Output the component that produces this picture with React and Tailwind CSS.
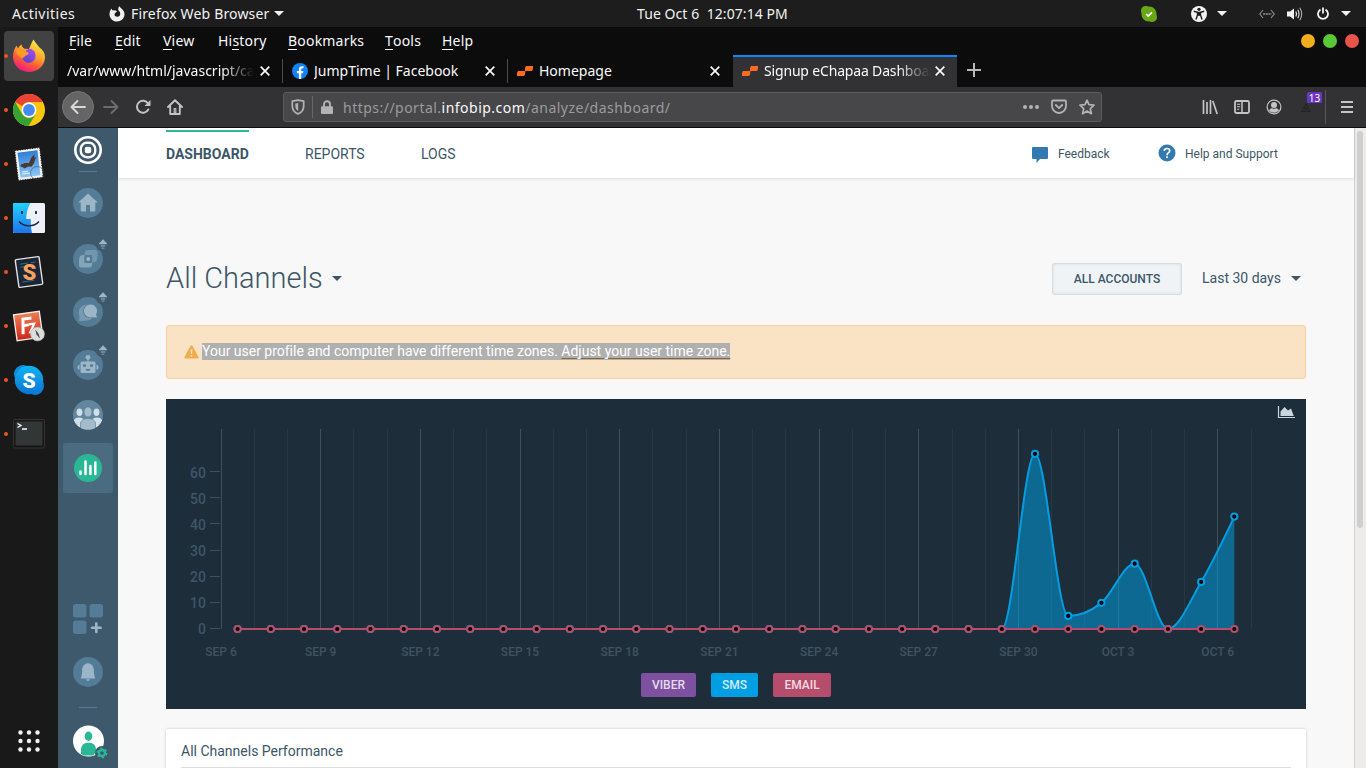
import React from "react";

const UI = "font-['Noto_Sans','Open_Sans',sans-serif]";

/* ---------- desktop top bar ---------- */

function CaretDown({ className = "", color = "#f2f2f2", w = 10, h = 5 }) {
  return (
    <svg width={w} height={h} viewBox="0 0 10 5" preserveAspectRatio="none" className={`block shrink-0 ${className}`}>
      <path d="M0 0H10L5 5Z" fill={color} />
    </svg>
  );
}

function TopBar() {
  return (
    <header className={`relative flex h-[27px] shrink-0 items-center bg-[#1d1d1d] text-[14px] text-[#f2f2f2] ${UI}`}>
      <span className="ml-3 w-[97px] whitespace-nowrap tracking-[0.5px]">Activities</span>
      <svg width="16" height="16" viewBox="0 0 16 16" className="block shrink-0">
        <path d="M8 15.6C3.7 15.6 .5 12.4 .5 8.3C.5 6 1.2 4 2.5 2.4C2.6 3.2 2.9 3.9 3.4 4.3L7 4.5L8 5.6L6.2 6.9C5.4 7.5 5.4 9 6.1 9.9C7 11 9.5 11.1 10.7 9.7C11.8 8.3 11.3 6.3 10 5.1C9 4.2 8.9 2 10.3 .3C11 1.6 12.2 2.1 13.2 3.2C14.8 4.8 15.6 6.4 15.5 8.6C15.3 12.6 12.1 15.6 8 15.6Z" fill="#f2f2f2" />
      </svg>
      <span className="ml-[6px] w-[138px] whitespace-nowrap tracking-[0.16px]">Firefox Web Browser</span>
      <CaretDown className="ml-[5px]" />
      <span className="ml-[353px] w-[151px] whitespace-pre tracking-[0.07px]">Tue Oct 6  12:07:14 PM</span>
      <svg width="16" height="16" viewBox="0 0 16 16" className="ml-[353px] block shrink-0">
        <path d="M4.500 0C6 0 7 .6 8 .6C12.500 .6 15.600 3.800 15.500 8C15.500 9 16 10 16 11.600C16 14 14 16 11.500 16C10 16 9 15.500 8 15.500C3.700 15.500 .5 12.300 .5 8C.5 7 0 6 0 4.500C0 2 2 0 4.500 0Z" fill="#68a818" />
        <path d="M5.200 8L7.200 10L11 6.400" fill="none" stroke="#fff" strokeWidth="1.700" />
      </svg>
      <svg width="16" height="16" viewBox="0 0 16 16" className="ml-[34px] block shrink-0">
        <circle cx="8" cy="8" r="8" fill="#f2f2f2" />
        <circle cx="8" cy="3.300" r="1.600" fill="#1d1d1d" />
        <path d="M2.800 5.300L6.500 6.200V9L5 13.500M13.200 5.300L9.500 6.200V9L11 13.500" fill="none" stroke="#1d1d1d" strokeWidth="1.400" />
        <path d="M6 5.800H10V9.800H6Z" fill="#1d1d1d" />
      </svg>
      <CaretDown className="ml-[10px]" />
      <svg width="16" height="10" viewBox="0 0 16 10" className="ml-[32px] block shrink-0" fill="none" stroke="#8a8a8a" strokeWidth="1.200">
        <path d="M4 1L.8 5L4 9M12 1L15.200 5L12 9" />
        <path d="M4 5H12.500" strokeWidth="1.500" strokeDasharray="2.200 .5" />
      </svg>
      <svg width="16" height="14" viewBox="0 0 16 14" className="ml-[12px] block shrink-0">
        <path d="M0 4.500H3L7 1.500V12.500L3 9.500H0Z" fill="#f2f2f2" />
        <path d="M8.800 4.500Q10.300 7 8.800 9.500" fill="none" stroke="#f2f2f2" strokeWidth="1.200" />
        <path d="M10.800 2.800Q13.200 7 10.800 11.200" fill="none" stroke="#d0d0d0" strokeWidth="1.200" />
        <path d="M12.800 .8Q16.600 7 12.800 13.200" fill="none" stroke="#a5a5a5" strokeWidth="1.200" />
      </svg>
      <svg width="12" height="13" viewBox="0 0 12 13" className="ml-[14px] block shrink-0" fill="none" stroke="#f2f2f2" strokeWidth="1.800">
        <path d="M3.500 2.600A5 5 0 1 0 8.500 2.600M6 .5V6.500" />
      </svg>
      <CaretDown className="ml-[12px]" />
    </header>
  );
}

/* ---------- dock ---------- */

function FirefoxLogo() {
  return (
    <svg width="34" height="34" viewBox="0 0 34 34">
      <defs>
        <linearGradient id="ffa" x1=".8" y1="0" x2=".3" y2="1">
          <stop offset="0" stopColor="#fff24a" />
          <stop offset=".4" stopColor="#ffb02e" />
          <stop offset=".7" stopColor="#ff5a36" />
          <stop offset="1" stopColor="#e6168a" />
        </linearGradient>
        <linearGradient id="ffb" x1=".8" y1="0" x2=".2" y2="1">
          <stop offset="0" stopColor="#a44cf0" />
          <stop offset="1" stopColor="#5a42c8" />
        </linearGradient>
      </defs>
      <path d="M17 33C8 33 1 26.500 1 17.500C1 12.500 3 9 4.500 6.500L6 9.500C7 7.500 8.500 6 9.500 5.500C9.800 7.500 11 9 12.500 9.800L17 10L20 3L21.500 .5C23 3.500 25.500 5.500 27.500 8.500C31 11 33 14 33 18C33 26.500 26 33 17 33Z" fill="url(#ffa)" />
      <path d="M10.500 16.500C12 12 15 9.800 18.500 10C22 10.500 24 14 23.500 17.500C23 22 19 24.500 15.500 23.800C12 23 10 20 10.500 16.500Z" fill="url(#ffb)" />
      <path d="M4 11C7 8.500 12 9.500 14 12.500L17 14C15.500 16.500 13.500 16 11.800 18.500C8 20 5 16 4 11Z" fill="#ff9a26" />
    </svg>
  );
}

function ChromeLogo() {
  return (
    <svg width="32" height="32" viewBox="0 0 32 32">
      <circle cx="16" cy="16" r="16" fill="#fbc610" />
      <path d="M2.140 8A16 16 0 0 1 29.860 8H16A8 8 0 0 0 9.070 12Z" fill="#ea4335" />
      <path d="M2.140 8A16 16 0 0 0 15.500 32L22.900 20A8 8 0 0 1 9.070 20Z" fill="#34a331" />
      <circle cx="16" cy="16" r="7.400" fill="#fff" />
      <circle cx="16" cy="16" r="5.900" fill="#448af2" />
    </svg>
  );
}

function StampLogo() {
  return (
    <svg width="34" height="34" viewBox="0 0 34 34">
      <defs>
        <linearGradient id="sky" x1="0" y1="0" x2="0" y2="1">
          <stop offset="0" stopColor="#2f7ed8" />
          <stop offset="1" stopColor="#8ec6f4" />
        </linearGradient>
      </defs>
      <g transform="rotate(-7 17 17)">
        <rect x="4.500" y="2" width="25" height="30" fill="#f3f3f0" />
        <rect x="4.500" y="2" width="25" height="30" fill="none" stroke="#191919" strokeWidth="1" strokeDasharray="1 1.500" />
        <rect x="7" y="4.500" width="20" height="25" fill="url(#sky)" />
        <path d="M8 18.500L9 16.500L13 15.500L17 16L20 11L23.500 8L23 11.500L25 10.500L22 17L19 20L16 19.500L12 21L10.500 19.500Z" fill="#4a3b34" />
        <path d="M9 24H15M9 26H17" stroke="#e9f4fd" strokeWidth="1" />
      </g>
      <circle cx="25" cy="26" r="6.500" fill="none" stroke="#3b4a5c" strokeOpacity=".5" />
    </svg>
  );
}

function FinderLogo() {
  return (
    <svg width="32" height="30" viewBox="0 0 32 30">
      <defs>
        <linearGradient id="fnd" x1="0" y1="0" x2="0" y2="1">
          <stop offset="0" stopColor="#1fd2ff" />
          <stop offset="1" stopColor="#1f74ee" />
        </linearGradient>
      </defs>
      <rect width="32" height="30" rx="1.500" fill="#eef2f8" />
      <path d="M1.500 0H17.500C14.500 5 13.300 10 13.300 16H17.800C17.700 21 18 26 19 30H1.500Q0 30 0 28.500V1.500Q0 0 1.500 0Z" fill="url(#fnd)" />
      <path d="M9 8V11M23 8V11" stroke="#1b2733" strokeWidth="1.800" />
      <path d="M6 18.500C11 24.300 21 24.300 26 18.500" fill="none" stroke="#1b2733" strokeWidth="1.400" />
    </svg>
  );
}

function SublimeLogo() {
  return (
    <svg width="32" height="34" viewBox="0 0 32 34">
      <g transform="rotate(-8 16 17)">
        <rect x="4" y="3" width="24" height="28" rx="1" fill="#1a2636" stroke="#e2e2e2" strokeWidth="1.400" />
        <path d="M8 8H16M8 11H13M19 8H24M8 26H20" stroke="#3f6b76" strokeWidth="1" />
      </g>
      <text x="16.300" y="25" textAnchor="middle" fontFamily="Roboto, sans-serif" fontSize="22" fontWeight="900" fill="#f9a15c">S</text>
    </svg>
  );
}

function FileZillaLogo() {
  return (
    <svg width="34" height="34" viewBox="0 0 34 34">
      <defs>
        <linearGradient id="fz" x1="0" y1="0" x2="0" y2="1">
          <stop offset="0" stopColor="#ee7f55" />
          <stop offset="1" stopColor="#cf241c" />
        </linearGradient>
      </defs>
      <g transform="rotate(-8 16 17)">
        <rect x="3.200" y="4" width="26" height="26" fill="url(#fz)" stroke="#f3efec" strokeWidth="1.300" />
        <path d="M10 24.500L12 9.500H20.500M10.500 16H17" fill="none" stroke="#fff" strokeWidth="3" />
        <path d="M17 15.500H22.500L17.500 23.500H22" fill="none" stroke="#fff" strokeWidth="2.200" />
      </g>
      <circle cx="25.500" cy="25" r="7" fill="#dcdddd" stroke="#a5a5a5" strokeWidth=".6" />
      <path d="M23.200 20.500L26.500 24.400L28 29.500L24.600 25.800Z" fill="#4a4a4a" />
    </svg>
  );
}

function SkypeLogo() {
  return (
    <svg width="32" height="32" viewBox="0 0 32 32">
      <defs>
        <linearGradient id="sk" x1="0" y1="0" x2="0" y2="1">
          <stop offset="0" stopColor="#10b4f2" />
          <stop offset="1" stopColor="#0b74d4" />
        </linearGradient>
      </defs>
      <circle cx="10" cy="10" r="9" fill="#0c8fdb" />
      <circle cx="22" cy="22" r="9" fill="#0b80dc" />
      <circle cx="16" cy="16" r="14.200" fill="url(#sk)" />
      <text x="16" y="23.500" textAnchor="middle" fontFamily="Roboto, sans-serif" fontSize="21" fontWeight="900" fill="#fff">S</text>
    </svg>
  );
}

function TerminalLogo() {
  return (
    <svg width="32" height="30" viewBox="0 0 32 30">
      <rect x=".5" y=".5" width="31" height="28.500" rx="1.500" fill="#161616" stroke="#343434" />
      <rect x="2.500" y="2.500" width="27" height="24" fill="#333636" />
      <path d="M4.500 4.500L8 6.500L4.500 8.500M9 10H14" fill="none" stroke="#fff" strokeWidth="1.300" />
    </svg>
  );
}

const DOCK = [FirefoxLogo, ChromeLogo, StampLogo, FinderLogo, SublimeLogo, FileZillaLogo, SkypeLogo, TerminalLogo];

function Dock() {
  return (
    <aside className="flex w-[58px] shrink-0 flex-col justify-between bg-[#191919] pt-[4px] pb-[16px]">
      <div className="flex flex-col gap-1">
        {DOCK.map((Logo, i) => (
          <div key={i} className="flex h-[50px] items-center">
            <i className="z-10 ml-[4px] block h-1 w-1 shrink-0 rounded-full bg-[#e9541f]" />
            <div className={i === 0 ? "-ml-1 flex h-[50px] w-[50px] items-center justify-center rounded-[4px] bg-[#424242]" : "-ml-1 flex h-[50px] w-[50px] items-center justify-center"}>
              <Logo />
            </div>
          </div>
        ))}
      </div>
      <svg width="22" height="22" viewBox="0 0 22 22" className="ml-[18px] block" fill="#f2f2f2">
        {[2.5, 11, 19.5].map((y) => [2.5, 11, 19.5].map((x) => <circle key={`${x}-${y}`} cx={x} cy={y} r="2.200" />))}
      </svg>
    </aside>
  );
}

/* ---------- browser chrome ---------- */

function MenuItem({ label, at = 0, className }) {
  return (
    <span className={`shrink-0 whitespace-nowrap ${className}`}>
      {label.slice(0, at)}
      <span className="inline-block border-b border-[#f9f9fa] leading-[16px]">{label[at]}</span>
      {label.slice(at + 1)}
    </span>
  );
}

function MenuBar() {
  return (
    <div className="flex h-[28px] shrink-0 items-center bg-[#0c0c0d] pl-[11px] text-[14px] tracking-[0.2px] text-[#f9f9fa]">
      <div className="flex pb-[2px]">
        <MenuItem label="File" className="w-[46px]" />
        <MenuItem label="Edit" className="w-[48px]" />
        <MenuItem label="View" className="w-[55px]" />
        <MenuItem label="History" at={2} className="w-[70px]" />
        <MenuItem label="Bookmarks" className="w-[97px]" />
        <MenuItem label="Tools" className="w-[57px]" />
        <MenuItem label="Help" className="w-[40px]" />
      </div>
      <div className="ml-auto flex gap-2 pr-[7px]">
        <i className="h-[14px] w-[14px] rounded-full bg-[#f0ad1e]" />
        <i className="h-[14px] w-[14px] rounded-full bg-[#5ac837]" />
        <i className="h-[14px] w-[14px] rounded-full bg-[#ea5349]" />
      </div>
    </div>
  );
}

function Close() {
  return (
    <svg width="10" height="10" viewBox="0 0 10 10" className="block shrink-0">
      <path d="M.7 .7L9.300 9.300M9.300 .7L.7 9.300" stroke="#f9f9fa" strokeWidth="1.700" />
    </svg>
  );
}

function InfobipIcon() {
  return (
    <svg width="16" height="16" viewBox="0 0 16 16" className="block shrink-0" fill="#ff6a22">
      <path d="M9 3H16V6L15 8H8V5Z" />
      <path d="M1 8H8.500L8 11.500L7 13H0V10Z" />
    </svg>
  );
}

function FacebookIcon() {
  return (
    <svg width="16" height="16" viewBox="0 0 16 16" className="block shrink-0">
      <circle cx="8" cy="8" r="8" fill="#1183f5" />
      <path d="M6.900 16V10.300H4.900V8H6.900V6.400C6.900 4.300 8.100 3.200 9.900 3.200L11.500 3.300V5.300H10.400C9.500 5.300 9.200 5.800 9.200 6.500V8H11.400L11 10.300H9.200V16Z" fill="#fff" />
    </svg>
  );
}

function Tab({ icon, title, active, sep, fade }) {
  return (
    <div className={`flex h-[32px] shrink-0 items-center border-t-2 pb-[2px] pl-[9px] ${active ? "w-[224px] border-[#0a84ff] bg-[#323234]" : "w-[225px] border-transparent"}`}>
      {icon && <span className="mr-[6px]">{icon}</span>}
      <span className={`mb-[2px] block min-w-0 flex-1 overflow-hidden whitespace-nowrap ${active ? "tracking-[-0.17px]" : ""} ${fade ? "[mask-image:linear-gradient(to_right,black_calc(100%-32px),transparent)]" : ""}`}>{title}</span>
      <span className={active ? "mr-[12px] ml-[5px]" : "mr-[12px] ml-[6px]"}><Close /></span>
      {sep ? <i className="block h-[24px] w-px bg-[#4c4c4e]" /> : <i className={active ? "w-0" : "w-px"} />}
    </div>
  );
}

function TabStrip() {
  return (
    <div className="flex h-[32px] shrink-0 items-center bg-[#0c0c0d] text-[14px] text-[#f9f9fa]">
      <Tab title="/var/www/html/javascript/ca" sep fade />
      <Tab icon={<FacebookIcon />} title="JumpTime | Facebook" sep />
      <Tab icon={<InfobipIcon />} title="Homepage" />
      <Tab icon={<InfobipIcon />} title="Signup eChapaa Dashboa" active fade />
      <svg width="14" height="14" viewBox="0 0 14 14" className="mb-[2px] ml-[10px] block">
        <path d="M0 7H14M7 0V14" stroke="#b8b8b9" strokeWidth="2" />
      </svg>
    </div>
  );
}

function NavBar() {
  return (
    <div className="flex h-[41px] shrink-0 items-center border-b border-[#0c0c0d] bg-[#323234]">
      <div className="ml-[4px] flex h-[32px] w-[32px] items-center justify-center rounded-full border border-[#777779] bg-[#656566]">
        <svg width="16" height="16" viewBox="0 0 16 16" fill="none" stroke="#d8d8d9" strokeWidth="1.900" strokeLinecap="round" strokeLinejoin="round">
          <path d="M15 8H1.500M7.500 2L1.500 8L7.500 14" />
        </svg>
      </div>
      <svg width="16" height="16" viewBox="0 0 16 16" className="ml-[9px] block" fill="none" stroke="#6c6c6e" strokeWidth="1.900" strokeLinecap="round" strokeLinejoin="round">
        <path d="M1 8H14.500M8.500 2L14.500 8L8.500 14" />
      </svg>
      <svg width="16" height="16" viewBox="0 0 16 16" className="ml-[16px] block" fill="none" stroke="#c4c4c5" strokeWidth="2">
        <path d="M13.300 10.500A6 6 0 1 1 13 4.500" strokeLinecap="round" />
        <path d="M15.500 1V7H9.500Z" fill="#c4c4c5" stroke="none" />
      </svg>
      <svg width="16" height="16" viewBox="0 0 16 16" className="ml-[16px] block" fill="none" stroke="#c4c4c5" strokeWidth="1.900" strokeLinejoin="round" strokeLinecap="round">
        <path d="M1 8L8 1.200L15 8M3.200 7.500V15H12.800V7.500" />
        <path d="M7.200 9.500H8.800V14H7.200Z" strokeWidth="1.200" />
      </svg>
      <div className="ml-[100px] flex h-[30px] w-[819px] items-center rounded-[3px] border border-[#5c5c5f] bg-[#474749]">
        <svg width="14" height="16" viewBox="0 0 14 16" className="ml-[7px] block" fill="none" stroke="#b3b3b4" strokeWidth="1.700">
          <path d="M7 1.200L12.700 2.200V7C12.700 11 10.500 13.500 7 14.900C3.500 13.500 1.300 11 1.300 7V2.200Z" strokeLinejoin="round" />
          <path d="M7.200 4V12C5 10.800 4.300 9 4.300 7V4.500Z" fill="#b3b3b4" stroke="none" />
        </svg>
        <i className="ml-[7px] block h-[22px] w-px bg-[#67676a]" />
        <svg width="12" height="14" viewBox="0 0 12 14" className="ml-[8px] block">
          <path d="M3 7V4.300A3 3 0 0 1 9 4.300V7" fill="none" stroke="#b3b3b4" strokeWidth="1.900" />
          <rect x="0" y="6.300" width="12" height="7.700" rx="1" fill="#b3b3b4" />
        </svg>
        <span className="ml-[10px] w-[360px] text-[14px] tracking-[0.48px] whitespace-nowrap text-[#9b9b9d]">
          https://portal.<span className="text-[#f9f9fa]">infobip.com</span>/analyze/dashboard/
        </span>
        <svg width="16" height="4" viewBox="0 0 16 4" className="ml-auto block" fill="#b3b3b4">
          <circle cx="2" cy="2" r="2" /><circle cx="8" cy="2" r="2" /><circle cx="14" cy="2" r="2" />
        </svg>
        <svg width="16" height="16" viewBox="0 0 16 16" className="ml-[12px] block" fill="none" stroke="#b3b3b4" strokeWidth="1.800" strokeLinecap="round" strokeLinejoin="round">
          <path d="M2 1.500H14Q15 1.500 15 2.500V7A7 7 0 0 1 1 7V2.500Q1 1.500 2 1.500Z" />
          <path d="M4.800 6L8 9.200L11.200 6" />
        </svg>
        <svg width="16" height="16" viewBox="0 0 16 16" className="mr-[6px] ml-[12px] block" fill="none" stroke="#b3b3b4" strokeWidth="1.700" strokeLinejoin="round">
          <path d="M8 1.200L10 5.700L15 6.200L11.300 9.600L12.400 14.700L8 12.100L3.600 14.700L4.700 9.600L1 6.200L6 5.700Z" />
        </svg>
      </div>
      <svg width="16" height="16" viewBox="0 0 16 16" className="ml-[100px] block" stroke="#c4c4c5" strokeWidth="1.700">
        <path d="M1.500 1V15M5 3V15M8.500 1V15M10.800 2L15.200 15" />
      </svg>
      <svg width="16" height="14" viewBox="0 0 16 14" className="ml-[16px] block" fill="none" stroke="#c4c4c5" strokeWidth="1.800">
        <rect x="1" y="1" width="14" height="12" rx="1.500" />
        <path d="M8 1V13" strokeWidth="1.500" />
        <path d="M3 4.200H6.200M3 6.700H6.200M3 9.200H5.200" strokeWidth="1.100" />
      </svg>
      <svg width="16" height="16" viewBox="0 0 16 16" className="ml-[16px] block" fill="#c4c4c5">
        <circle cx="8" cy="8" r="6.900" fill="none" stroke="#c4c4c5" strokeWidth="1.200" />
        <circle cx="8" cy="6" r="3" />
        <path d="M3 11.200C4.500 9.300 5.500 9.300 6.300 9.300Q8 10.300 9.700 9.300C10.500 9.300 11.500 9.300 13 11.200Q11.200 13.700 8 13.700Q4.800 13.700 3 11.200Z" />
      </svg>
      <div className="relative ml-[19px] h-[30px] w-[21px]">
        <svg width="10" height="9" viewBox="0 0 10 9" className="absolute top-[11px] left-0 block" fill="none" stroke="#232325" strokeWidth=".9">
          <path d="M.5 8.500L5 .8L9.500 8.500ZM3 8.500L5 4.800L7 8.500M3 5H7" />
        </svg>
        <span className="absolute top-0 left-[6px] flex h-[11px] w-[15px] items-center justify-center rounded-[1.500px] bg-[#6a35c2] text-[10px] leading-none text-white">13</span>
      </div>
      <i className="ml-[3px] block h-[34px] w-px bg-[#58585b]" />
      <svg width="12" height="12" viewBox="0 0 12 12" className="ml-[15px] block">
        <path d="M0 1H12M0 6H12M0 11H12" stroke="#c4c4c5" strokeWidth="2" />
      </svg>
    </div>
  );
}

/* ---------- portal side navigation ---------- */

const DISC = "#547c97";
const PALE = "#9bb6c7";

function UpBadge() {
  return (
    <g transform="translate(-1 0)">
      <circle cx="31" cy="6" r="7.500" fill="#3d596b" />
      <path d="M31 1.200L35 5.400V6.200H27V5.400ZM28.800 7.500H33.200V8.500H28.800ZM29.600 9.700H32.400V10.500H29.600Z" fill={PALE} />
    </g>
  );
}

function SideNav() {
  return (
    <nav className="flex w-[60px] shrink-0 flex-col items-center bg-[#3d596b]">
      <svg width="28" height="28" viewBox="0 0 28 28" className="mt-[8px] block">
        <circle cx="14" cy="14" r="12.700" fill="none" stroke="#fff" strokeWidth="2.600" />
        <rect x="6.800" y="6.800" width="14.400" height="14.400" rx="6" fill="none" stroke="#fff" strokeWidth="2.400" />
        <rect x="10.800" y="10.800" width="6.400" height="6.400" rx="2" fill="#fff" />
      </svg>
      <i className="mt-[7px] block h-px w-[18px] bg-[#547c97]" />
      <svg width="30" height="30" viewBox="0 0 30 30" className="mt-[16px] block">
        <circle cx="15" cy="15" r="15" fill={DISC} />
        <path d="M15 5.500L24.800 14.500H22.300V22.500Q22.300 23.500 21.300 23.500H17V17H13V23.500H8.700Q7.700 23.500 7.700 22.500V14.500H5.200Z" fill={PALE} />
      </svg>
      <svg width="38" height="38" viewBox="0 0 38 38" className="mt-[20px] ml-[8px] block">
        <circle cx="15" cy="21" r="15" fill={DISC} />
        <path d="M15 12H22Q24.500 12 24.500 14.500V19Q24.500 24 20 24.500H11.500V16Q11.500 12 15 12Z" fill="#7397ad" />
        <path d="M10 17H19.200V26Q19.200 29.500 16 29.500H8.500Q6 29.500 6 27V22Q6 17 10 17Z" fill="#84a4b8" />
        <rect x="11.300" y="17" width="8" height="8" rx="1" fill={DISC} />
        <circle cx="15.200" cy="21" r="1.900" fill={PALE} />
        <UpBadge />
      </svg>
      <svg width="38" height="38" viewBox="0 0 38 38" className="mt-[15px] ml-[8px] block">
        <circle cx="15" cy="21" r="15" fill={DISC} />
        <path d="M6 30L6.500 25A8 8 0 1 1 14 29.500L9 30Z" fill={PALE} fillOpacity=".5" />
        <circle cx="17.500" cy="20" r="7.300" fill={DISC} />
        <path d="M17.500 13.500A6.500 6.500 0 1 0 19 26.300L24 26.500L23 23.500A6.500 6.500 0 0 0 17.500 13.500Z" fill={PALE} />
        <UpBadge />
      </svg>
      <svg width="38" height="38" viewBox="0 0 38 38" className="mt-[15px] ml-[8px] block">
        <circle cx="15" cy="21" r="15" fill={DISC} />
        <path d="M14.400 14H15.600V18H14.400Z" fill={PALE} />
        <circle cx="15" cy="13.300" r="2.400" fill={PALE} />
        <rect x="7.500" y="17.500" width="15" height="11.500" rx="1.500" fill={PALE} />
        <path d="M6.500 20.500V26Q4.500 25.500 4.500 23.200Q4.500 21 6.500 20.500ZM23.500 20.500V26Q25.500 25.500 25.500 23.200Q25.500 21 23.500 20.500Z" fill={PALE} />
        <circle cx="11.500" cy="21.500" r="1.600" fill={DISC} />
        <circle cx="18.500" cy="21.500" r="1.600" fill={DISC} />
        <path d="M12.500 25H17.500Q17 27 15 27Q13 27 12.500 25Z" fill={DISC} />
        <UpBadge />
      </svg>
      <svg width="30" height="30" viewBox="0 0 30 30" className="mt-[18px] block">
        <defs><clipPath id="ppl"><circle cx="15" cy="15" r="15" /></clipPath></defs>
        <circle cx="15" cy="15" r="15" fill="#62869f" />
        <g clipPath="url(#ppl)">
          <g fill="#d3dfe6">
            <ellipse cx="6.500" cy="12.300" rx="2.900" ry="3.800" /><ellipse cx="23.500" cy="12.300" rx="2.900" ry="3.800" />
            <path d="M1 27V20Q2 17.500 6 17.500Q10 17.500 11 20V27ZM29 27V20Q28 17.500 24 17.500Q20 17.500 19 20V27Z" />
          </g>
          <g fill="#a3bccb" stroke="#62869f" strokeWidth=".7">
            <ellipse cx="15" cy="12" rx="4" ry="5" />
            <path d="M7.500 30V23Q8.500 18.500 15 18.500Q21.500 18.500 22.500 23V30Z" />
          </g>
        </g>
      </svg>
      <div className="mt-[13px] flex h-[50px] w-[50px] shrink-0 items-center justify-center rounded-[3px] bg-[#4a6b80]">
        <svg width="28" height="28" viewBox="0 0 28 28" className="block">
          <circle cx="14" cy="14" r="14" fill="#2ab795" />
          <path d="M6.500 17.500V20M11.500 7.500V20M16.400 12V20M21.300 8.500V20" stroke="#fff" strokeWidth="2.500" strokeLinecap="round" />
        </svg>
      </div>
      <svg width="30" height="30" viewBox="0 0 30 30" className="mt-[111px] block">
        <g fill={DISC}>
          <rect width="13.500" height="13.500" rx="2.500" /><rect x="16.500" width="13.500" height="13.500" rx="2.500" /><rect y="16.500" width="13.500" height="13.500" rx="2.500" />
        </g>
        <path d="M23.300 19.500V28M19 23.700H27.600" stroke={PALE} strokeWidth="2.600" strokeLinecap="round" />
      </svg>
      <svg width="30" height="30" viewBox="0 0 30 30" className="mt-[23px] block">
        <circle cx="15" cy="15" r="15" fill={DISC} />
        <path d="M15 6.300C19 6.800 20.700 9.500 20.800 13C20.900 17 21.300 19 22.300 21.500H7.700C8.700 19 9.100 17 9.200 13C9.300 9.500 11 6.800 15 6.300ZM13 22.200H17Q16.500 24 15 24Q13.500 24 13 22.200Z" fill={PALE} />
      </svg>
      <i className="mt-[20px] block h-px w-[18px] shrink-0 bg-[#547c97]" />
      <svg width="36" height="34" viewBox="0 0 36 34" className="mt-[17px] ml-[6px] block shrink-0">
        <circle cx="15.500" cy="16" r="15.500" fill="#fff" />
        <ellipse cx="15.500" cy="11.300" rx="3.800" ry="4.700" fill="#2ab795" />
        <path d="M8 29V23.500Q9 17.800 15.500 17.800Q22 17.800 23 23.500V27L20 30.500H10.500Z" fill="#2ab795" />
        <circle cx="29" cy="28" r="7" fill="#3d596b" />
        <circle cx="29" cy="28" r="3" fill="none" stroke="#2ab795" strokeWidth="2.300" />
        <circle cx="29" cy="28" r="4.600" fill="none" stroke="#2ab795" strokeWidth="1.700" strokeDasharray="2.400 2.417" />
      </svg>
    </nav>
  );
}

/* ---------- dashboard ---------- */

function PageHeader() {
  return (
    <div className="relative z-10 flex h-[50px] shrink-0 items-start bg-white pt-[2px] pl-[48px] text-[14px] text-[#3c5668] shadow-[0_1px_3px_rgba(0,0,0,0.12)]">
      <span className="flex h-[48px] w-[83px] items-center border-t-2 border-[#2ab795] pb-[2px] font-bold whitespace-nowrap">DASHBOARD</span>
      <span className="ml-[56px] flex h-[48px] w-[60px] items-center">REPORTS</span>
      <span className="ml-[56px] flex h-[48px] w-[40px] items-center">LOGS</span>
      <div className="ml-auto flex h-[48px] items-center pr-[76px] text-[12px]">
        <svg width="16" height="16" viewBox="0 0 16 16" className="mt-[2px] block">
          <path d="M1 0H15Q16 0 16 1V11Q16 12 15 12H8L4.500 16V12H1Q0 12 0 11V1Q0 0 1 0Z" fill="#337ab0" />
        </svg>
        <span className="ml-[10px] w-[52px] whitespace-nowrap">Feedback</span>
        <svg width="18" height="18" viewBox="0 0 18 18" className="-mt-[2px] ml-[48px] block">
          <circle cx="9" cy="9" r="8.500" fill="#337ab0" />
          <path d="M6.300 7Q6.300 4.500 9 4.500Q11.700 4.500 11.700 6.800Q11.700 8 10.300 8.900Q9 9.700 9 11.200" fill="none" stroke="#fff" strokeWidth="1.700" />
          <rect x="8.100" y="12.300" width="1.800" height="1.800" fill="#fff" />
        </svg>
        <span className="ml-[9px] w-[93px] whitespace-nowrap">Help and Support</span>
      </div>
    </div>
  );
}

const SMS = [...Array(24).fill(0), 67, 5, 10, 25, 0, 18, 43];
const LABELS = ["SEP 6", "SEP 9", "SEP 12", "SEP 15", "SEP 18", "SEP 21", "SEP 24", "SEP 27", "SEP 30", "OCT 3", "OCT 6"];
const STEP = 33.225;
const BASE = 230;
const px = (i) => 71.6 + i * STEP;
const py = (v) => BASE - v * 2.615;

/* Monotone cubic interpolation, so the curve never overshoots its points. */
function curve(values) {
  const s = values.slice(1).map((v, i) => py(v) - py(values[i]));
  const t = values.map((_, i) => {
    if (i === 0 || i === values.length - 1) return 0;
    const a = s[i - 1];
    const b = s[i];
    if (a * b <= 0) return 0;
    return Math.sign(a) * Math.min(2 * Math.abs(a), 2 * Math.abs(b), Math.abs(a + b) / 2);
  });
  const n = values.length - 1;
  t[n] = (3 * s[n - 1] - t[n - 1]) / 2;
  return values.slice(1).reduce((d, v, k) => {
    const i = k + 1;
    return `${d}C${px(k) + STEP / 3} ${py(values[k]) + t[k] / 3} ${px(i) - STEP / 3} ${py(v) - t[i] / 3} ${px(i)} ${py(v)}`;
  }, `M${px(0)} ${py(values[0])}`);
}

function Chart() {
  const line = curve(SMS);
  return (
    <svg width="1140" height="274" viewBox="0 0 1140 274" className="block" fontFamily="Roboto, sans-serif" fontWeight="500">
      {Array.from({ length: 32 }, (_, i) => (
        <rect key={i} x={Math.floor(55.05 + i * STEP)} y="30" width="1" height="200" fill={i % 3 === 0 && i < 31 ? "#41515c" : "#283843"} />
      ))}
      {[0, 10, 20, 30, 40, 50, 60].map((v) => (
        <g key={v}>
          <rect x="44" y={Math.round(229 - v * 2.615)} width="10" height="1" fill="#41515c" />
          <text x="40" y={235 - v * 2.6} textAnchor="end" fontSize="14" fill="#3d566a">{v}</text>
        </g>
      ))}
      {LABELS.map((l, i) => (
        <text key={l} x={55 + i * 3 * STEP} y="257" textAnchor="middle" fontSize="12" fill="#42535f">{l}</text>
      ))}
      <path d={`${line}V${BASE}H${px(0)}Z`} fill="#009fe3" fillOpacity=".53" />
      <path d={line} fill="none" stroke="#069de0" strokeWidth="2" />
      {SMS.map((v, i) => <circle key={i} cx={px(i)} cy={py(v)} r="3.100" fill="#000" stroke="#069de0" strokeWidth="2" />)}
      <path d={`M${px(0)} ${BASE}H${px(30)}`} stroke="#b74d6d" strokeWidth="2" />
      {SMS.map((_, i) => <circle key={i} cx={px(i)} cy={BASE} r="3.100" fill="#000" stroke="#b74d6d" strokeWidth="2" />)}
      <path d="M1112.500 7V18.500H1129" fill="none" stroke="#c9d6dd" strokeWidth="1.200" />
      <path d="M1114.500 17V12.500L1118.500 8L1122 11.500L1125 9.500L1127.800 17Z" fill="#c9d6dd" />
    </svg>
  );
}

function Dashboard() {
  return (
    <div className="flex min-w-0 flex-1 flex-col bg-[#f8f8f8] font-['Roboto',sans-serif] text-[#3c5668]">
      <PageHeader />
      <main className="flex flex-col pr-[48px] pl-[48px]">
        <div className="mt-[85px] flex h-[32px] items-center">
          <h1 className="mb-[2px] text-[29px] leading-[32px] font-light whitespace-nowrap">All Channels</h1>
          <CaretDown className="mb-[2px] ml-[9px]" color="#3c5668" />
          <div className="ml-auto flex h-[32px] w-[130px] items-center justify-center rounded-[2px] border border-[#d8dde1] bg-[#eff3f6] text-[12px] font-medium shadow-[inset_0_0_3px_rgba(0,0,0,0.1)]">ALL ACCOUNTS</div>
          <span className="mb-[2px] ml-[20px] w-[79px] text-[14px] whitespace-nowrap">Last 30 days</span>
          <CaretDown className="mr-[5px] mb-[2px] ml-[10px]" color="#3c5668" />
        </div>
        <div className="mt-[30px] flex h-[54px] items-center rounded-[3px] border border-[#fbcba7] bg-[#fae2c5] pb-px pl-[17px] text-[14px]">
          <svg width="15" height="14" viewBox="0 0 15 14" className="block">
            <path d="M7.500 .3Q8.200 .3 8.600 1L14.500 12Q15 13.300 13.700 13.400H1.300Q0 13.300 .5 12L6.400 1Q6.800 .3 7.500 .3Z" fill="#f0ad4e" />
            <path d="M6.700 4.500H8.300L8.100 9H6.900ZM6.700 10H8.300V11.600H6.700Z" fill="#fae2c5" />
          </svg>
          <p className="ml-[3px] h-[17px] bg-[#b0b0b0] leading-[17px] tracking-[-0.012px] whitespace-nowrap text-white">
            Your user profile and computer have different time zones. <span className="underline decoration-[#8a6430] decoration-1 underline-offset-2">Adjust your user time zone.</span>
          </p>
        </div>
        <section className="mt-[20px] h-[310px] bg-[#1d2d39]">
          <Chart />
          <div className="flex gap-[15px] pl-[475px] text-[12px] font-medium">
            <span className="flex h-[24px] w-[55px] items-center justify-center rounded-[2px] bg-[#7d519f] text-[#e4daeb]">VIBER</span>
            <span className="flex h-[24px] w-[47px] items-center justify-center rounded-[2px] bg-[#009fe3] text-[#d0edf9]">SMS</span>
            <span className="flex h-[24px] w-[58px] items-center justify-center rounded-[2px] bg-[#b74d6d] text-[#f2dae1]">EMAIL</span>
          </div>
        </section>
        <section className="mt-[20px] h-[60px] rounded-[2px] bg-white px-[15px] shadow-[0_0_3px_rgba(0,0,0,0.2)]">
          <h2 className="flex h-[39px] items-center border-b border-[#dcdcdc] pt-[6px] text-[14px]">All Channels Performance</h2>
        </section>
      </main>
    </div>
  );
}

export default function App() {
  return (
    <div className="flex h-[768px] w-[1366px] flex-col overflow-hidden bg-[#191919]">
      <TopBar />
      <div className="flex min-h-0 flex-1">
        <Dock />
        <div className={`flex min-w-0 flex-1 flex-col ${UI}`}>
          <MenuBar />
          <TabStrip />
          <NavBar />
          <div className="flex min-h-0 flex-1 overflow-hidden">
            <SideNav />
            <Dashboard />
            <div className="w-[12px] shrink-0 border-l border-[#d5d0cc] bg-[#edeceb] pt-[3px] pl-[2px]">
              <div className="h-[397px] w-[6px] rounded-full bg-[#cfcfcf]" />
            </div>
          </div>
        </div>
      </div>
    </div>
  );
}
